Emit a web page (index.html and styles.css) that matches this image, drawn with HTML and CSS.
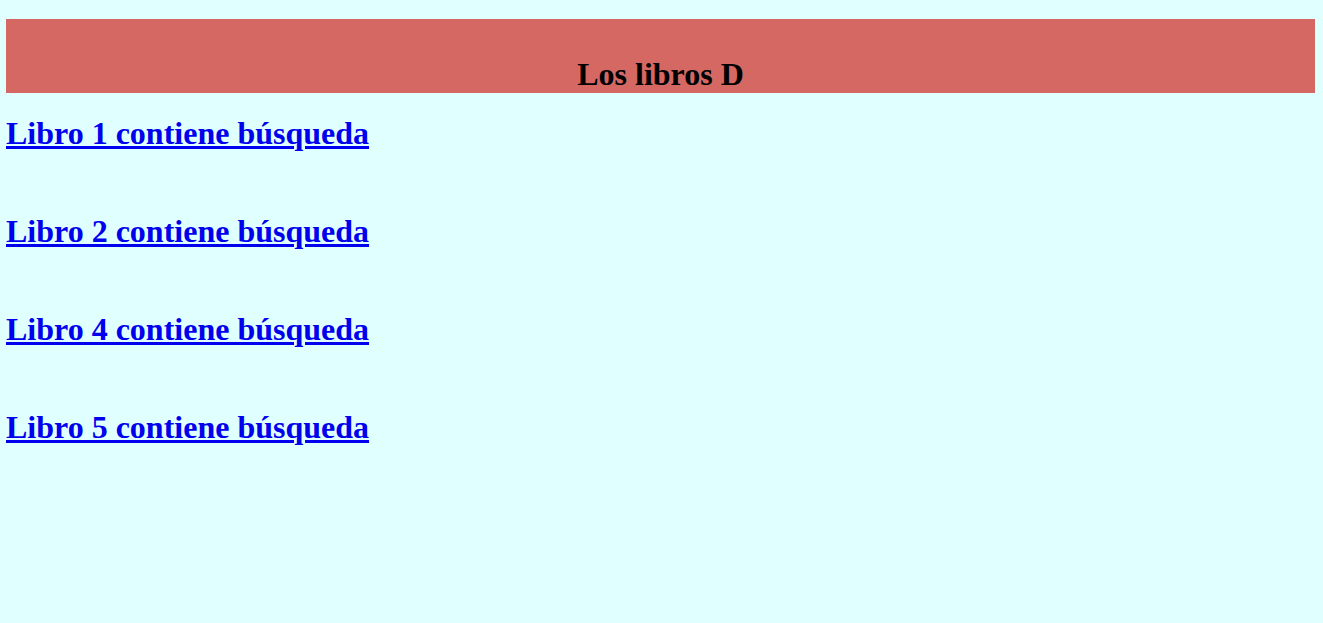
FILE: index.html
```html
<!DOCTYPE html>
<html lang="es">
<head>
<meta charset="utf-8">
<title>Los libros D</title>
<link rel="stylesheet" href="styles.css">
</head>
<body>
<header class="banner">
  <h1 class="banner-title">Los libros D</h1>
</header>
<main class="results">
  <h2 class="result"><a href="#">Libro 1 contiene búsqueda</a></h2>
  <h2 class="result"><a href="#">Libro 2 contiene búsqueda</a></h2>
  <h2 class="result"><a href="#">Libro 4 contiene búsqueda</a></h2>
  <h2 class="result"><a href="#">Libro 5 contiene búsqueda</a></h2>
</main>
</body>
</html>
```
FILE: styles.css
```css
html, body {
  background: #e0ffff;
}
body {
  margin: 0;
  padding: 19px 8px 0 6px;
  font-family: "Liberation Serif", "Times New Roman", serif;
}
.banner {
  background: #d66864;
  height: 74px;
  box-sizing: border-box;
  padding-top: 37px;
}
.banner-title {
  margin: 0;
  font-size: 32px;
  line-height: 36px;
  font-weight: bold;
  text-align: center;
  color: #000;
}
.results {
  display: flex;
  flex-direction: column;
  gap: 62px;
  padding-top: 22px;
}
.result {
  margin: 0;
  font-size: 32px;
  line-height: 36px;
  font-weight: bold;
}
.result a {
  color: #0000ee;
  text-decoration: underline;
}
```
